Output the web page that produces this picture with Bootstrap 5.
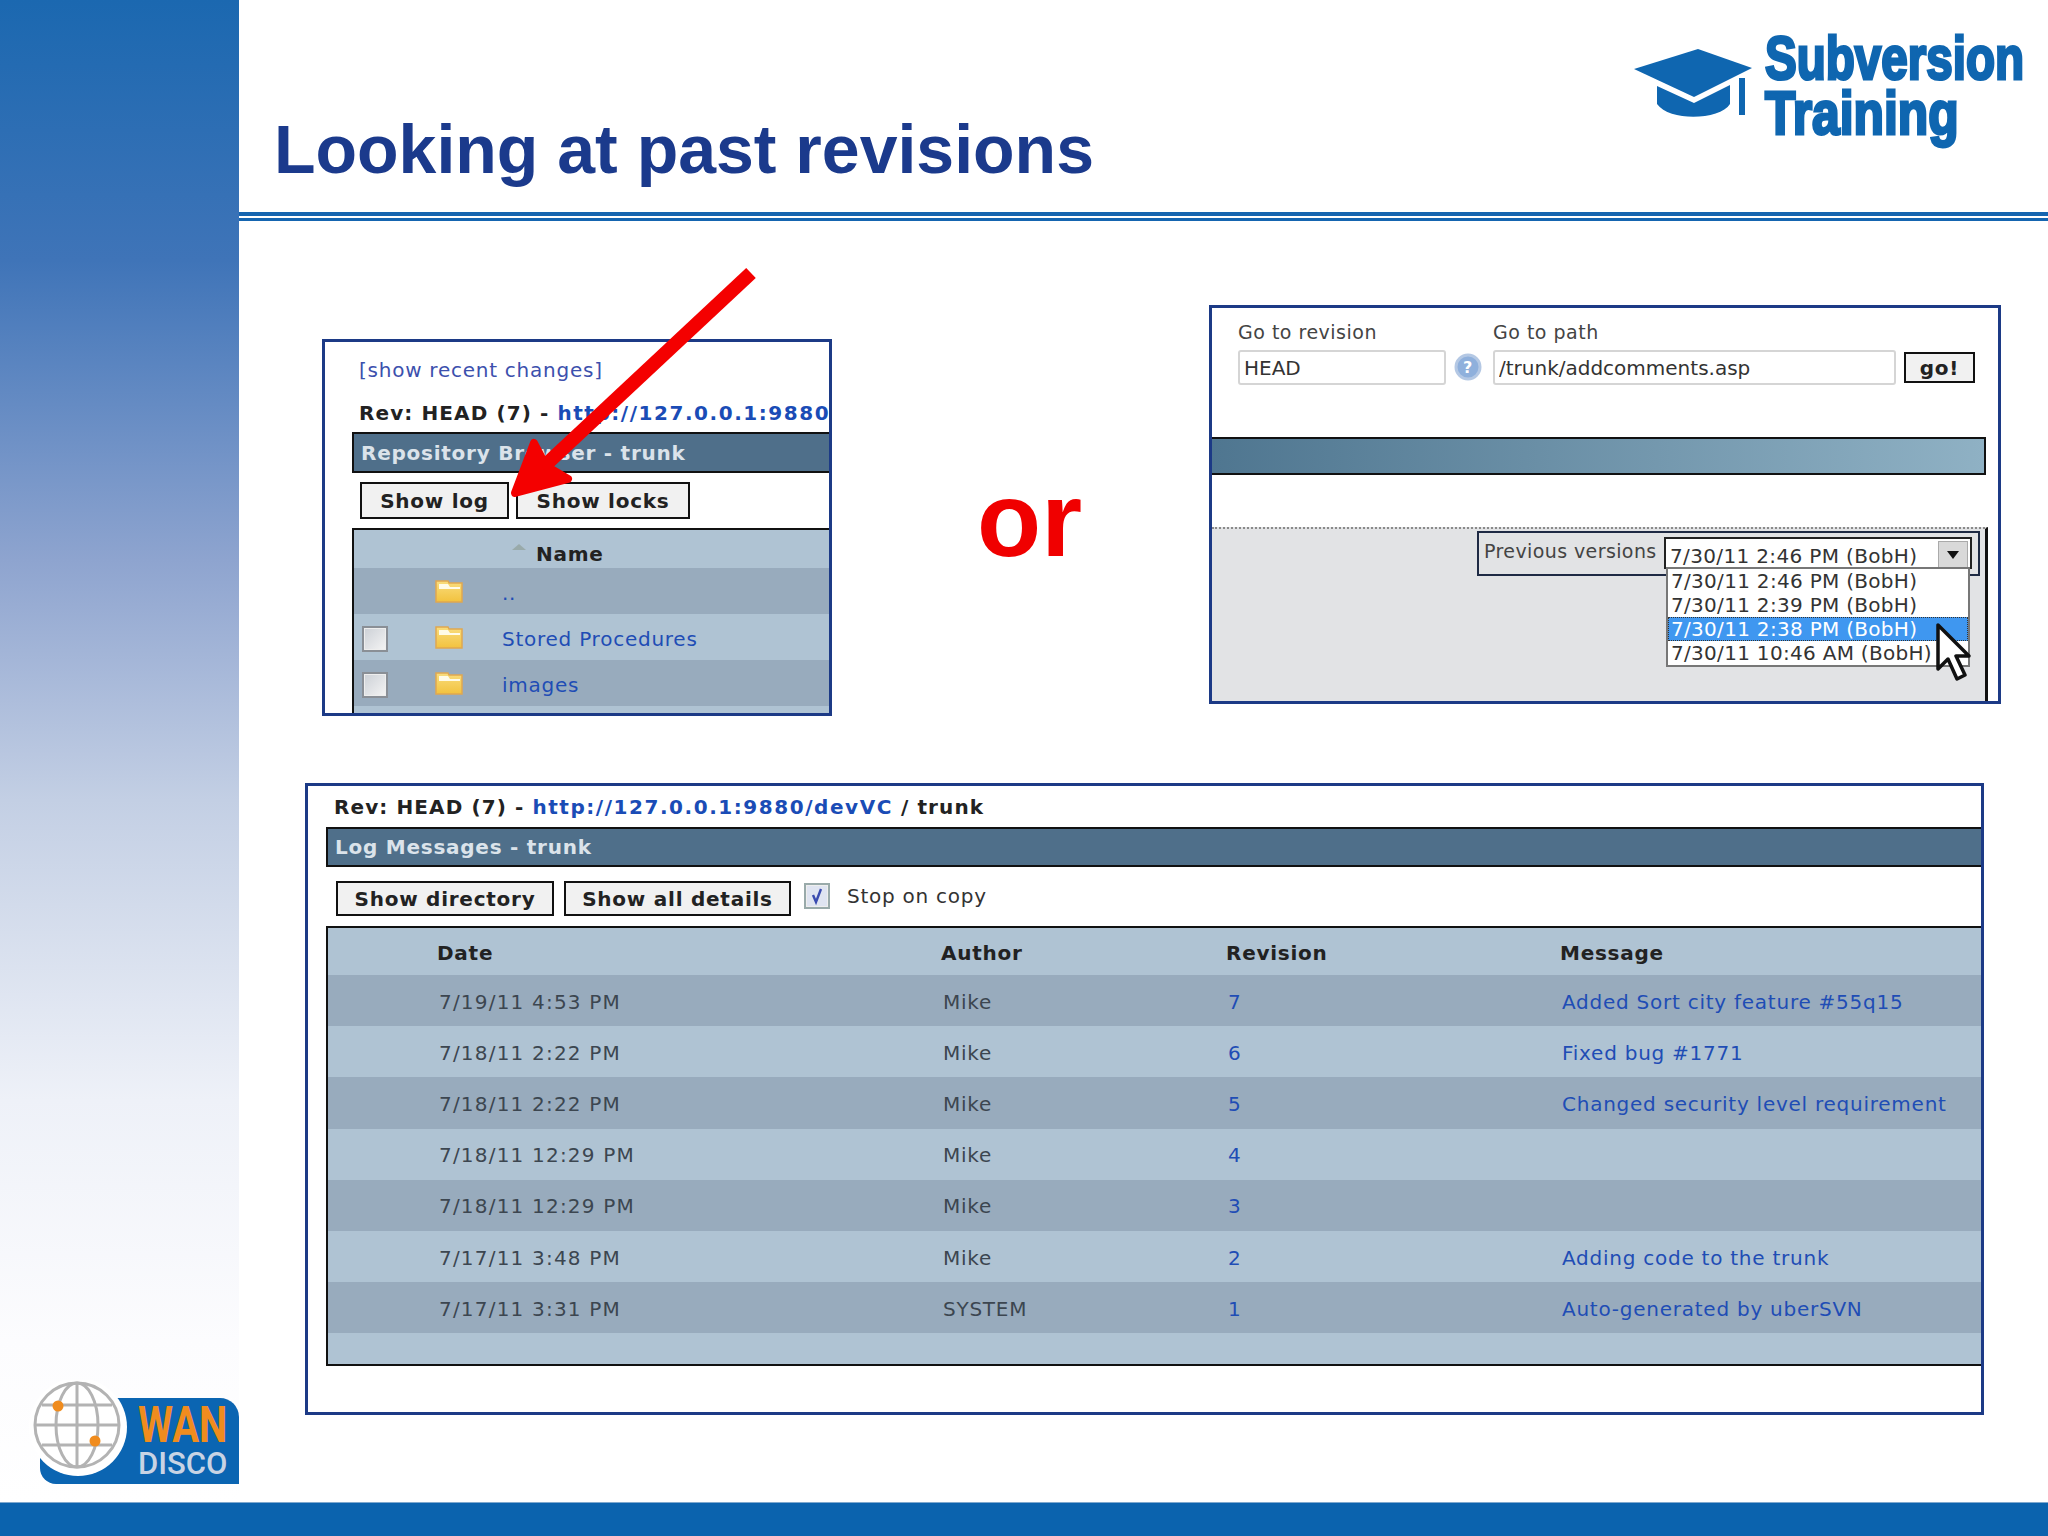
<!DOCTYPE html>
<html lang="en">
<head>
<meta charset="utf-8">
<title>Looking at past revisions</title>
<link href="https://cdn.jsdelivr.net/npm/bootstrap@5.3.0/dist/css/bootstrap.min.css" rel="stylesheet">
<style>
html,body{height:1536px;overflow:hidden;background:#fff}
.slide{height:1536px}
.side-band{width:239px;background:linear-gradient(180deg,#1b68b0 0,#3f74b8 260px,#8ea4cf 560px,#c3cfe4 800px,#eef1f8 1100px,#fcfcfe 1340px,#fff 100%);padding-bottom:18px}
.foot-band{height:34px;background:#0b63ae;border-top:1px solid #7fa9cf}
.slide-head{height:212px}
.slide-title{font:700 68px/1 "Liberation Sans",sans-serif;color:#1b3a8c;margin:0 0 29px 35px}
.head-rule{height:9px;border-top:4px solid #1565b0;border-bottom:3px solid #1565b0}
.stage{padding:84px 0 0 66px}
.shot{border:3px solid #1c3a86;background:#fff;font:20px/1.2 "DejaVu Sans",sans-serif;letter-spacing:.75px;color:#333;overflow:hidden;white-space:nowrap}
.shot a{color:#1f4db5;text-decoration:none}
.shot-a{width:510px;height:377px;margin:34px 0 0 17px}
.shot-b{width:792px;height:399px}
.shot-c{width:1679px;height:632px;margin-top:67px}
.or-word{font:700 105px/1 "Liberation Sans",sans-serif;color:#f00000;width:377px;text-align:center;padding:162px 0 0 18px}
.recent{height:50px;padding:15px 0 0 34px;color:#3c50ad;line-height:26px}
.recent a{color:#3c50ad}
.rev-line{font-weight:700;color:#222;line-height:24px;padding-left:34px;height:40px;padding-top:9px;letter-spacing:1.1px}
.rev-line.c{padding-left:26px;height:41px;padding-top:9px}
.rev-line a{color:#1a4cb6;letter-spacing:1.55px}
.band{background:#4f6f8a;border:2px solid #111;border-right:0;color:#dbe3ea;font-weight:700;line-height:39px;padding-left:7px;height:41px;margin-left:27px}
.band.c{margin-left:18px;height:40px;line-height:37px}
.tools{height:55px;padding:9px 0 0 35px;gap:7px}
.tools.c{height:59px;padding:14px 0 0 28px;gap:10px}
.scr-btn{--bs-btn-padding-x:0;--bs-btn-padding-y:0;--bs-btn-border-radius:0;--bs-btn-border-width:2px;--bs-btn-border-color:#111;--bs-btn-bg:#f1f1f1;--bs-btn-color:#222;--bs-btn-font-weight:700;--bs-btn-font-size:20px;--bs-btn-font-family:"DejaVu Sans",sans-serif;--bs-btn-line-height:1;letter-spacing:.75px;display:flex;align-items:center;justify-content:center}
.btn-log{width:149px;height:37px}.btn-locks{width:174px;height:37px}
.btn-dir{width:218px;height:35px}.btn-all{width:227px;height:35px}
.btn-go{width:71px;height:31px;margin:0 0 2px 8px}
.grid-a{margin-left:27px;border-top:2px solid #111;border-left:2px solid #111;background:#afc3d3;height:185px}
.grid-a th,.grid-c th{font-weight:700;color:#222}
.grid-a tr.hd{height:38px}
.grid-a tr.hd th{padding-top:11px}
.grid-a tr.rw{height:46px}
.grid-a tr.rw td{padding-top:5px}
.col-box{width:80px}.col-ico{width:67px}
.tone-d{background:#98abbd}
.tone-l{background:#afc3d3}
.sort-tip{width:0;height:0;border:7px solid transparent;border-top:0;border-bottom:6px solid #9aa;display:inline-block;margin:0 10px 11px 10px}
.chk{width:26px;height:26px;background:linear-gradient(135deg,#ccd0d6,#f4f4f4);border:2px solid #8a8f96;outline:1px solid #eee;outline-offset:-3px;display:block}
.chk.on{background:#dfe4f1;border-color:#9aa;margin:2px 0 0 3px}
.chk.on svg{display:block}
.stop-txt{margin:3px 0 0 7px}
.label-b{height:28px;line-height:28px;color:#444;margin-bottom:4px;font-size:19px;letter-spacing:.5px}
.field{height:35px;border:2px solid #d5d5d5;border-radius:3px;padding:0 4px;font:20px "DejaVu Sans",sans-serif;letter-spacing:0;color:#333;background:#fff;box-shadow:none}
.fld-a{width:208px}.fld-b{width:403px}
.form-row{padding:10px 0 0 26px}
.hint{width:47px;height:35px}
.band-b{width:774px;height:38px;margin-top:52px;background:linear-gradient(90deg,#4f7690,#8fb1c4);border:2px solid #111;border-left:0}
.grey-zone{width:776px;height:176px;margin-top:52px;background:#e2e3e5;border-top:2px dotted #8a8a8a;border-right:3px solid #111;padding:2px 5px 0 0}
.prev-box{width:503px;height:45px;border:2px solid #1e2a44;position:relative}
.prev-txt{position:absolute;left:5px;top:7px;color:#444;font-size:19px;letter-spacing:.4px}
.pick{position:absolute;left:185px;top:4px;width:308px;height:32px;background:#fff;border:2px solid #222;border-bottom:0;padding:3px 4px;line-height:28px;color:#333;letter-spacing:.35px}
.pick-btn{position:absolute;right:2px;top:2px;width:30px;height:28px;background:#d9d9d9;border:1px solid #aaa}
.pick-btn::after{content:"";position:absolute;left:8px;top:9px;border:6px solid transparent;border-top:8px solid #111;border-bottom:0}
.pick-list{position:absolute;left:187px;top:34px;width:304px;height:100px;background:#fff;border:2px solid #777;z-index:2;color:#333;line-height:24px;letter-spacing:.3px}
.pick-list div{padding-left:3px}
.pick-list .cur{background:#3f97f0;color:#fff;outline:1px dotted #333;outline-offset:-1px}
.pointer{position:absolute;left:456px;top:90px;z-index:3}
.arrow-layer{position:absolute;left:0;top:0;z-index:5;pointer-events:none;overflow:visible}
.a-wrap{position:relative}
.grid-c{margin-left:18px;border-top:2px solid #111;border-left:2px solid #111;border-bottom:2px solid #111;background:#afc3d3;height:440px;width:1655px}
.grid-c table{table-layout:fixed;width:100%}
.grid-c tr.hd{height:47px}
.grid-c tr.rw{height:51.2px}
.grid-c td,.grid-c th{padding:2px 0 0;vertical-align:middle}
.grid-c th.d,.grid-c td.d{padding-left:111px}
.grid-c td.d{letter-spacing:1.2px}
.grid-c th{position:relative;left:-2px}
.grid-c td{color:#3c4650}
.col-date{width:615px}.col-auth{width:285px}.col-rev{width:334px}
.fold-ico{display:block;margin-top:-3px}
</style>
</head>
<body>
<div class="slide d-flex flex-column">
  <div class="d-flex flex-grow-1">
    <aside class="side-band d-flex flex-column justify-content-end flex-shrink-0">
      <svg width="239" height="104" viewBox="0 0 239 104">
        <path d="M40 18H220a19 19 0 0 1 19 19V104H56a16 16 0 0 1-16-16Z" fill="#0b65b2"/>
        <circle cx="78" cy="47" r="49" fill="#fff"/>
        <g fill="none" stroke="#b3b3b3" stroke-width="3">
          <circle cx="77" cy="45" r="42"/>
          <ellipse cx="77" cy="45" rx="21" ry="42"/>
          <path d="M77 3V87M36 45H118M42 25H112M42 65H112"/>
        </g>
        <circle cx="58" cy="26" r="5.5" fill="#f08c1e"/>
        <circle cx="95" cy="61" r="5.5" fill="#f08c1e"/>
        <g transform="translate(138 62) scale(.8 1)"><text font-family="Roboto,sans-serif" font-weight="700" font-size="50" fill="#f08c1e">WAN</text></g>
        <g transform="translate(138 94) scale(.97 1)"><text font-family="Roboto,sans-serif" font-weight="500" font-size="32" fill="#c8d4e4">DISCO</text></g>
      </svg>
    </aside>
    <main class="flex-grow-1 d-flex flex-column">
      <header class="slide-head d-flex justify-content-between align-items-end">
        <h1 class="slide-title">Looking at past revisions</h1>
        <svg class="align-self-start" width="415" height="150" viewBox="1633 0 415 150">
          <path d="M1634 69L1698 49L1752 68L1694 97Z" fill="#0f66b0"/>
          <path d="M1657 86L1694 103L1730 85V104C1720 120 1670 122 1657 104Z" fill="#0f66b0"/>
          <path d="M1739 78H1745V115H1739Z" fill="#0f66b0"/>
          <g transform="translate(1765 79) scale(.78 1)" font-family="Liberation Sans,sans-serif" font-weight="700" font-size="61" fill="#0f66b0" stroke="#0f66b0" stroke-width="3"><text>Subversion</text></g>
          <g transform="translate(1765 134) scale(.816 1)" font-family="Liberation Sans,sans-serif" font-weight="700" font-size="61" fill="#0f66b0" stroke="#0f66b0" stroke-width="3"><text>Training</text></g>
        </svg>
      </header>
      <div class="head-rule"></div>
      <div class="stage">
        <div class="d-flex align-items-start">
          <div class="a-wrap">
            <section class="shot shot-a">
              <div class="recent"><a href="#">[show recent changes]</a></div>
              <div class="rev-line">Rev: HEAD (7) - <a href="#">http://127.0.0.1:9880</a></div>
              <div class="band">Repository Browser - trunk</div>
              <div class="tools d-flex">
                <button class="btn scr-btn btn-log">Show log</button>
                <button class="btn scr-btn btn-locks">Show locks</button>
              </div>
              <div class="grid-a">
                <table class="w-100">
                  <tr class="hd"><th class="col-box"></th><th class="col-ico"></th><th><span class="sort-tip"></span>Name</th></tr>
                  <tr class="rw tone-d"><td></td><td><svg class="fold-ico" width="28" height="23" viewBox="0 0 28 23"><use href="#fold"/></svg></td><td><a href="#">..</a></td></tr>
                  <tr class="rw tone-l"><td class="ps-2"><span class="chk"></span></td><td><svg class="fold-ico" width="28" height="23" viewBox="0 0 28 23"><use href="#fold"/></svg></td><td><a href="#">Stored Procedures</a></td></tr>
                  <tr class="rw tone-d"><td class="ps-2"><span class="chk"></span></td><td><svg class="fold-ico" width="28" height="23" viewBox="0 0 28 23"><use href="#fold"/></svg></td><td><a href="#">images</a></td></tr>
                </table>
              </div>
            </section>
            <svg class="arrow-layer" width="520" height="420" viewBox="305 305 520 420">
              <path d="M751 273L538 472" stroke="#f40000" stroke-width="14" fill="none"/>
              <path d="M515 493L534 443L546 466L568 479Z" fill="#f40000" stroke="#f40000" stroke-width="8" stroke-linejoin="round"/>
            </svg>
          </div>
          <div class="or-word">or</div>
          <section class="shot shot-b">
            <div class="form-row d-flex align-items-end">
              <div>
                <div class="label-b">Go to revision</div>
                <input class="form-control field fld-a" value="HEAD">
              </div>
              <svg class="hint" viewBox="0 0 47 35"><circle cx="22" cy="17" r="12" fill="#8fb0dc" stroke="#b4c8e4" stroke-width="3"/><text x="22" y="23" text-anchor="middle" font-family="DejaVu Sans,sans-serif" font-weight="700" font-size="16" fill="#fff">?</text></svg>
              <div>
                <div class="label-b">Go to path</div>
                <input class="form-control field fld-b" value="/trunk/addcomments.asp">
              </div>
              <button class="btn scr-btn btn-go">go!</button>
            </div>
            <div class="band-b"></div>
            <div class="grey-zone d-flex justify-content-end">
              <div class="prev-box">
                <span class="prev-txt">Previous versions</span>
                <div class="pick">7/30/11 2:46 PM (BobH)<span class="pick-btn"></span></div>
                <div class="pick-list">
                  <div>7/30/11 2:46 PM (BobH)</div>
                  <div>7/30/11 2:39 PM (BobH)</div>
                  <div class="cur">7/30/11 2:38 PM (BobH)</div>
                  <div>7/30/11 10:46 AM (BobH)</div>
                </div>
                <svg class="pointer" width="36" height="58" viewBox="0 0 36 58"><path d="M3 2V46L13 36L22 56L30 52L21 33H34Z" fill="#fff" stroke="#111" stroke-width="3.5" stroke-linejoin="round"/></svg>
              </div>
            </div>
          </section>
        </div>
        <section class="shot shot-c">
          <div class="rev-line c">Rev: HEAD (7) - <a href="#">http://127.0.0.1:9880/devVC</a> / trunk</div>
          <div class="band c">Log Messages - trunk</div>
          <div class="tools c d-flex align-items-start">
            <button class="btn scr-btn btn-dir">Show directory</button>
            <button class="btn scr-btn btn-all">Show all details</button>
            <span class="chk on"><svg width="22" height="22" viewBox="0 0 22 22"><path d="M7 10L10 17L15 4" fill="none" stroke="#3a4bb0" stroke-width="2.4"/></svg></span>
            <span class="stop-txt">Stop on copy</span>
          </div>
          <div class="grid-c">
            <table>
              <colgroup><col class="col-date"><col class="col-auth"><col class="col-rev"><col></colgroup>
              <tr class="hd"><th class="d">Date</th><th>Author</th><th>Revision</th><th>Message</th></tr>
              <tr class="rw tone-d"><td class="d">7/19/11 4:53 PM</td><td>Mike</td><td><a href="#">7</a></td><td><a href="#">Added Sort city feature #55q15</a></td></tr>
              <tr class="rw tone-l"><td class="d">7/18/11 2:22 PM</td><td>Mike</td><td><a href="#">6</a></td><td><a href="#">Fixed bug #1771</a></td></tr>
              <tr class="rw tone-d"><td class="d">7/18/11 2:22 PM</td><td>Mike</td><td><a href="#">5</a></td><td><a href="#">Changed security level requirement</a></td></tr>
              <tr class="rw tone-l"><td class="d">7/18/11 12:29 PM</td><td>Mike</td><td><a href="#">4</a></td><td></td></tr>
              <tr class="rw tone-d"><td class="d">7/18/11 12:29 PM</td><td>Mike</td><td><a href="#">3</a></td><td></td></tr>
              <tr class="rw tone-l"><td class="d">7/17/11 3:48 PM</td><td>Mike</td><td><a href="#">2</a></td><td><a href="#">Adding code to the trunk</a></td></tr>
              <tr class="rw tone-d"><td class="d">7/17/11 3:31 PM</td><td>SYSTEM</td><td><a href="#">1</a></td><td><a href="#">Auto-generated by uberSVN</a></td></tr>
            </table>
          </div>
        </section>
      </div>
    </main>
  </div>
  <footer class="foot-band flex-shrink-0"></footer>
</div>
<svg width="0" height="0" class="d-block"><defs>
  <linearGradient id="fg" x1="0" y1="0" x2="0" y2="1"><stop offset="0" stop-color="#f9dd7e"/><stop offset="1" stop-color="#f2c23e"/></linearGradient>
  <g id="fold"><path d="M1 1H13L14 3H27V22H1Z" fill="url(#fg)" stroke="#e0a850" stroke-width="1.5"/><path d="M4 4H13L15 7H25V9H4Z" fill="#fffbe8"/></g>
</defs></svg>
<script src="https://cdn.jsdelivr.net/npm/bootstrap@5.3.0/dist/js/bootstrap.bundle.min.js"></script>
</body>
</html>
